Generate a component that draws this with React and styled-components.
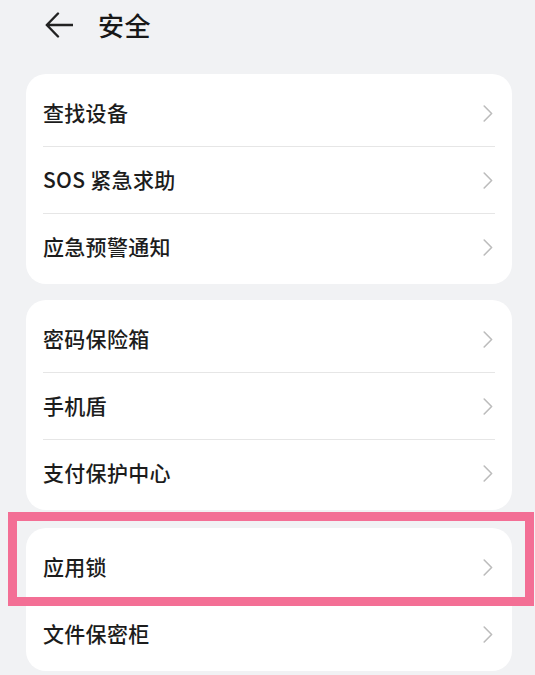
import styled, { createGlobalStyle } from 'styled-components';

const GlobalStyle = createGlobalStyle`
  html, body {
    margin: 0;
    padding: 0;
    background: #f1f2f4;
  }
  body {
    font-family: "Noto Sans CJK SC", "Noto Sans", sans-serif;
    color: #1b1b1b;
  }
`;

const groups = [
  ['查找设备', 'SOS 紧急求助', '应急预警通知'],
  ['密码保险箱', '手机盾', '支付保护中心'],
  ['应用锁', '文件保密柜'],
];

export default function App() {
  return (
    <>
      <GlobalStyle />
      <Page>
        <Header>
          <BackButton aria-label='返回'>
            <svg width='28' height='26' viewBox='0 0 28 26' fill='none'>
              <path
                d='M13 1.5 L1.8 13 L13 24.5 M1.8 13 H27.5'
                stroke='#222'
                strokeWidth='2.4'
                strokeLinecap='round'
                strokeLinejoin='round'
              />
            </svg>
          </BackButton>
          <Title>安全</Title>
        </Header>
        {groups.map((items, gi) => (
          <Card key={gi} $last={gi === groups.length - 1}>
            {items.map((label, i) => (
              <Row key={label} $first={i === 0}>
                <Label>{label}</Label>
                <Chevron />
                {gi === 2 && i === 0 && <Highlight />}
              </Row>
            ))}
          </Card>
        ))}
      </Page>
    </>
  );
}

function Chevron() {
  return (
    <ChevronIcon width='10' height='17' viewBox='0 0 10 17' fill='none'>
      <path
        d='M1.2 1 L8.6 8.5 L1.2 16'
        stroke='#bcbcbc'
        strokeWidth='1.6'
        strokeLinecap='round'
        strokeLinejoin='round'
      />
    </ChevronIcon>
  );
}

const Page = styled.div`
  width: 535px;
  height: 675px;
  overflow: hidden;
  display: flex;
  flex-direction: column;
  padding: 0 23px 0 26px;
  box-sizing: border-box;
`;

const Header = styled.div`
  height: 50px;
  display: flex;
  align-items: center;
  padding-left: 19px;
  margin-bottom: 24px;
`;

const BackButton = styled.button`
  border: none;
  background: none;
  padding: 0;
  margin-right: 25px;
  display: flex;
  align-items: center;
`;

const Title = styled.h1`
  margin: 0 0 2px;
  font-size: 26px;
  font-weight: 500;
  color: #181818;
  letter-spacing: 0.5px;
`;

const Card = styled.div`
  background: #ffffff;
  border-radius: 20px;
  padding: 6px 0 4px;
  margin-bottom: ${(p) => (p.$last ? 0 : '16px')};
  & + & + & {
    margin-top: 2px;
  }
`;

const Row = styled.div`
  position: relative;
  height: 66px;
  margin: 0 17px;
  display: flex;
  align-items: center;
  justify-content: space-between;
  border-top: ${(p) => (p.$first ? 'none' : '1px solid #e6e6e6')};
`;

const Label = styled.span`
  font-size: 21px;
  font-weight: 500;
  color: #1c1c1c;
  letter-spacing: 0.3px;
  margin-bottom: 3px;
`;

const ChevronIcon = styled.svg`
  margin-right: 2px;
`;

const Highlight = styled.div`
  position: absolute;
  z-index: 1;
  left: -35px;
  right: -39px;
  top: -22px;
  bottom: -6px;
  border: 9px solid #f36f95;
  pointer-events: none;
`;
